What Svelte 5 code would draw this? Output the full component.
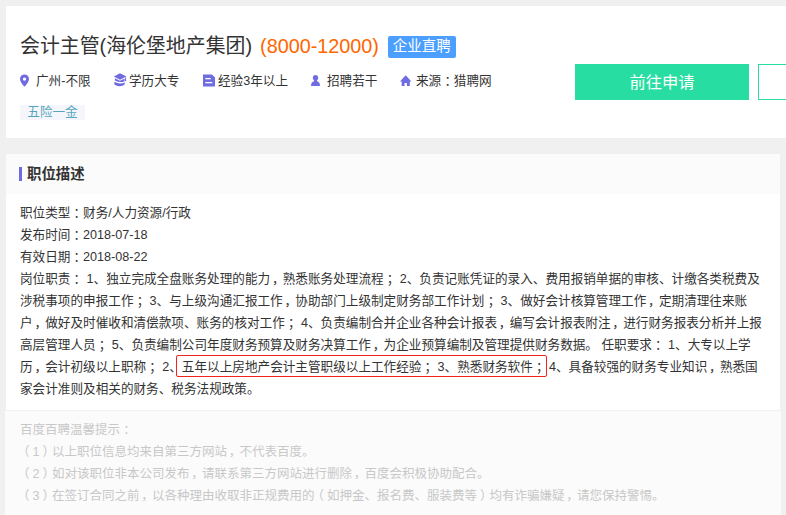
<script>
  const details = [
    '职位类型：财务/人力资源/行政',
    '发布时间：2018-07-18',
    '有效日期：2018-08-22',
    '岗位职责： 1、独立完成全盘账务处理的能力，熟悉账务处理流程； 2、负责记账凭证的录入、费用报销单据的审核、计缴各类税费及',
    '涉税事项的申报工作； 3、与上级沟通汇报工作，协助部门上级制定财务部工作计划； 3、做好会计核算管理工作，定期清理往来账',
    '户，做好及时催收和清偿款项、账务的核对工作； 4、负责编制合并企业各种会计报表，编写会计报表附注，进行财务报表分析并上报',
    '高层管理人员； 5、负责编制公司年度财务预算及财务决算工作，为企业预算编制及管理提供财务数据。 任职要求： 1、大专以上学'
  ];
  const tips = [
    '百度百聘温馨提示：',
    '（1）以上职位信息均来自第三方网站，不代表百度。',
    '（2）如对该职位非本公司发布，请联系第三方网站进行删除，百度会积极协助配合。',
    '（3）在签订合同之前，以各种理由收取非正规费用的（如押金、报名费、服装费等）均有诈骗嫌疑，请您保持警惕。'
  ];
  const kinds = { '：': 'colon', '；': 'colon', '，': 'comma', '（': 'open', '）': 'close' };
  const parts = (text) => text.split(/([：；，（）])/).filter((s) => s);
</script>

{#snippet run(text)}{#each parts(text) as p}{#if kinds[p]}<span class="punct {kinds[p]}">{p}</span>{:else}{p}{/if}{/each}{/snippet}

<main>
  <section class="summary">
    <div class="info">
      <div class="heading">
        <h1>会计主管(海伦堡地产集团)</h1>
        <span class="salary">(8000-12000)</span>
        <span class="badge">企业直聘</span>
      </div>
      <ul class="meta">
        <li style:width="93px">
          <svg width="16" height="14" viewBox="0 0 16 14"><path fill-rule="evenodd" d="M4.5.5C2 .5 0 2.3 0 4.9 0 7.7 2.4 10 4.5 12.8 6.6 10 9 7.7 9 4.9 9 2.3 7 .5 4.5.5Zm0 2.9a1.7 1.7 0 1 1 0 3.4 1.7 1.7 0 0 1 0-3.4Z" /></svg><span>广州-不限</span>
        </li>
        <li style:width="89px">
          <svg width="16" height="14" viewBox="0 0 16 14"><path d="M7-.7 13.4 2.5 7 5.8.8 2.6Z" /><path d="M1.9 4.2 7 6.8 11.6 4.5V7.2Q7 9.3 1.9 6.6Z" /><path d="M1.4 7.8Q6.5 10.7 11.7 8.5V10.6Q7 14 1.4 10.4Z" /><path d="M12.1 3.4h1v3.8h-1Z" /></svg><span>学历大专</span>
        </li>
        <li style:width="107px">
          <svg width="16" height="14" viewBox="0 0 16 14"><path fill-rule="evenodd" d="M1 .5h9L13 3.5v9H1ZM3.3 4v1.2h5.5V4Zm0 4v1.2h7V8Z" /></svg><span>经验3年以上</span>
        </li>
        <li style:width="89px">
          <svg width="18" height="14" viewBox="0 0 18 14"><path d="M6.5 1a2.7 2.9 0 0 1 1.4 5.4v.8Q11 7.8 11 12H2Q2 7.8 5.1 7.2v-.8A2.7 2.9 0 0 1 6.5 1Z" /></svg><span>招聘若干</span>
        </li>
        <li>
          <svg width="18" height="14" viewBox="0 0 18 14"><path d="M7.7 1.3 13.4 7.5h-1.6V12H8.9V9H6.5v3H3.7V7.5H2Z" /></svg><span>{@render run('来源：猎聘网')}</span>
        </li>
      </ul>
      <span class="tag">五险一金</span>
    </div>
    <div class="actions">
      <button class="apply">前往申请</button>
      <button class="secondary" aria-label="secondary"></button>
    </div>
  </section>

  <section class="description">
    <header><h2>职位描述</h2></header>
    <div class="body">
      {#each details as line}<p>{@render run(line)}</p>{/each}
      <p>{@render run('历，会计初级以上职称； 2、')}<span class="marked">{@render run('五年以上房地产会计主管职级以上工作经验； 3、熟悉财务软件；')}</span>{@render run(' 4、具备较强的财务专业知识，熟悉国')}</p>
      <p>家会计准则及相关的财务、税务法规政策。</p>
    </div>
  </section>

  <footer>
    {#each tips as line}<p>{@render run(line)}</p>{/each}
  </footer>
</main>

<style>
  :global(body) { background: #f0f0f0; overflow: hidden; }
  main {
    box-sizing: border-box;
    width: 786px;
    height: 515px;
    padding: 6px 0 0 6px;
    overflow: hidden;
    background: #f0f0f0;
    color: #333;
    font: 12.62px/22px "Liberation Sans", "Noto Sans CJK SC", sans-serif;
    white-space: nowrap;
    font-kerning: none;
    text-spacing-trim: space-all;
  }
  h1, h2, p, ul { margin: 0; padding: 0; }
  p { height: 22px; white-space: pre; }
  .summary {
    display: flex;
    box-sizing: border-box;
    height: 132px;
    padding-left: 14px;
    background: #fff;
    overflow: hidden;
  }
  .info { flex: 0 0 555px; padding-top: 27px; }
  .heading { display: flex; align-items: center; height: 28px; }
  h1 { font-size: 19.9px; font-weight: 400; line-height: 26px; height: 28px; }
  .salary { margin-left: 8px; color: #f60; font-size: 19.8px; line-height: 26px; height: 28px; }
  .badge {
    box-sizing: border-box;
    width: 68px;
    height: 22px;
    margin: 0 0 0 9px;
    border-radius: 2px;
    background: #4c9fff;
    color: #fff;
    font-size: 14.5px;
    line-height: 21px;
    text-align: center;
  }
  .meta { display: flex; height: 22px; margin-top: 9px; list-style: none; }
  .meta li { display: flex; align-items: center; }
  .meta svg { flex: none; fill: #6f6be0; overflow: visible; }
  .tag {
    display: block;
    width: 65px;
    height: 15px;
    margin-top: 13px;
    background: #f5f6fb;
    color: #58a6bd;
    line-height: 14px;
    text-align: center;
  }
  .actions { display: flex; flex: none; gap: 9px; padding-top: 58px; }
  button {
    box-sizing: border-box;
    height: 36px;
    padding: 0;
    border: 1px solid #28dda2;
    font: 16.3px/34px "Liberation Sans", "Noto Sans CJK SC", sans-serif;
  }
  .apply { width: 174px; background: #28dda2; color: #fff; }
  .secondary { width: 120px; background: #fff; }
  .description { width: 774px; margin-top: 16px; background: #fff; }
  header {
    display: flex;
    align-items: center;
    height: 40px;
    padding-left: 13px;
    background: #fbfbfb;
  }
  h2 {
    height: 14px;
    padding-left: 5px;
    border-left: 3px solid #6f6be0;
    font-size: 14.4px;
    font-weight: 700;
    line-height: 14px;
  }
  .body { height: 198px; padding: 8px 0 10px 14px; }
  .marked { position: relative; }
  .marked::after {
    content: "";
    position: absolute;
    inset: -5px -2px -3px -6px;
    border: 1px solid #f5221b;
    border-radius: 2px;
  }
  footer {
    box-sizing: border-box;
    width: 776px;
    height: 105px;
    margin: 1px 0 0 -1px;
    padding: 8px 0 0 15px;
    background: #fbfbfb;
    color: #c8c8c8;
    font-size: 12.5px;
  }
  .punct {
    font-family: "Noto Sans CJK SC", sans-serif;
    font-feature-settings: "halt";
    line-height: 0;
  }
  .colon { padding: 0 0.25em; }
  .comma { padding: 0 0.36em 0 0.14em; }
  .open { padding: 0 0.24em 0 0.26em; }
  .close { padding: 0 0.26em 0 0.24em; }
</style>
